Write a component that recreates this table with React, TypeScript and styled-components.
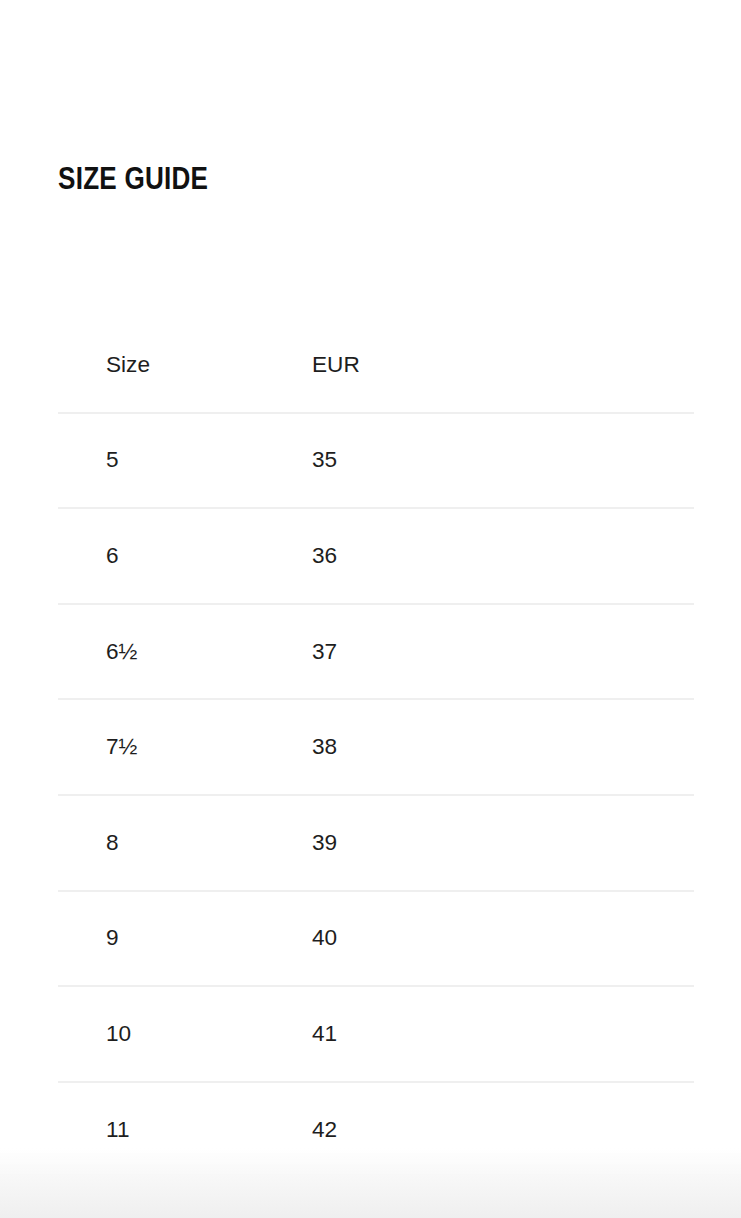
import React from "react";
import styled, { createGlobalStyle } from "styled-components";

const Global = createGlobalStyle`
  html, body { margin: 0; padding: 0; background: #ffffff; }
  body { font-family: "Liberation Sans", Arial, sans-serif; color: #1a1a1a; }
`;

const Page = styled.main`
  min-height: 1218px;
  padding: 162px 47px 0 58px;
  box-sizing: border-box;
`;

const Title = styled.h1`
  margin: 0;
  display: inline-block;
  transform: scaleX(0.815);
  transform-origin: left center;
  font-family: "Liberation Sans", Arial, sans-serif;
  font-weight: 700;
  font-size: 32px;
  line-height: 32px;
  letter-spacing: 0.3px;
  color: #111;
`;

const Table = styled.div`
  margin-top: 124px;
  display: flex;
  flex-direction: column;
`;

const Row = styled.div<{ $last?: boolean }>`
  display: grid;
  grid-template-columns: 206px 1fr;
  align-items: center;
  height: 93.6px;
  border-bottom: ${(p) => (p.$last ? "none" : "2px solid #efefef")};
`;

const Cell = styled.div`
  padding-left: 48px;
  font-size: 22.6px;
  line-height: 26px;
  color: #1e1e1e;
  font-weight: 400;
`;

const Fade = styled.div`
  position: fixed;
  left: 0;
  right: 0;
  bottom: 0;
  height: 70px;
  pointer-events: none;
  background: linear-gradient(to bottom, rgba(255,255,255,0) 0%, #f7f7f7 45%, #efefef 100%);
`;

const rows: [string, string][] = [
  ["Size", "EUR"],
  ["5", "35"],
  ["6", "36"],
  ["6½", "37"],
  ["7½", "38"],
  ["8", "39"],
  ["9", "40"],
  ["10", "41"],
  ["11", "42"],
];

export default function App() {
  return (
    <>
      <Global />
      <Page>
        <Title>SIZE GUIDE</Title>
        <Table>
          {rows.map(([a, b], i) => (
            <Row key={i} $last={i === rows.length - 1}>
              <Cell>{a}</Cell>
              <Cell>{b}</Cell>
            </Row>
          ))}
        </Table>
      </Page>
      <Fade />
    </>
  );
}
